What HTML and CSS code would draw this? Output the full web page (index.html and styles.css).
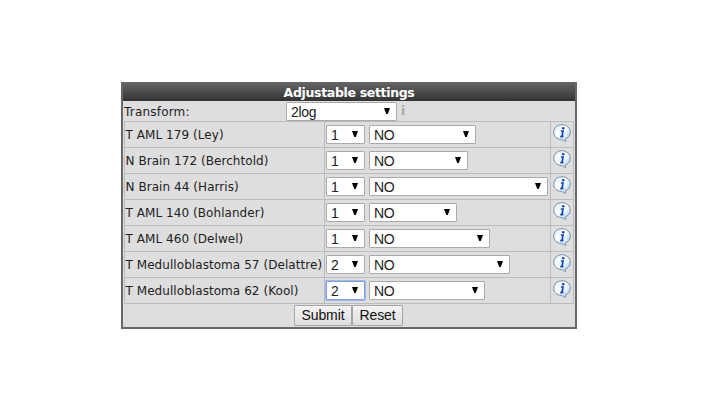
FILE: index.html
```html
<!DOCTYPE html>
<html lang="en">
<head>
<meta charset="utf-8">
<title>Adjustable settings</title>
<link rel="stylesheet" href="styles.css">
</head>
<body>
<svg class="defs" aria-hidden="true">
  <defs>
    <linearGradient id="bubble" x1="0" y1="0" x2="1" y2="1">
      <stop offset="0" stop-color="#d5edff"/><stop offset=".4" stop-color="#fff"/><stop offset=".65" stop-color="#e4f3ff"/><stop offset="1" stop-color="#80bdf0"/>
    </linearGradient>
    <symbol id="info" viewBox="0 0 18 18">
      <path d="M9 .7C4.300.7.8 3.900.8 8.200c0 4 2.900 6.900 7.400 7.300 1.400.2 2.500 1.200 4.600 1.900-.6-1-.6-1.900-.2-2.700 2.800-1 4.600-3.500 4.600-6.500C17.200 3.900 13.700.7 9 .7z" fill="url(#bubble)" stroke="#7590a8" stroke-width="1"/>
      <path d="M7.800 7h2.200L9 12.300h1.500M7.200 12.600h2.700" fill="none" stroke="#1747b5" stroke-width="1.700"/>
      <circle cx="10.200" cy="4.300" r="1.300" fill="#1747b5"/>
    </symbol>
  </defs>
</svg>
<main class="panel">
  <h1 class="title">Adjustable settings</h1>
  <div class="transform"><span class="transform-label">Transform:</span><div class="select w-transform">2log</div><span class="hint">i</span></div>
  <div class="grid">
    <div class="row"><div class="name">T AML 179 (Ley)</div><div class="controls"><div class="select count">1</div><div class="select w-ley">NO</div></div><div class="info"><svg><use href="#info"/></svg></div></div>
    <div class="row"><div class="name">N Brain 172 (Berchtold)</div><div class="controls"><div class="select count">1</div><div class="select w-berchtold">NO</div></div><div class="info"><svg><use href="#info"/></svg></div></div>
    <div class="row"><div class="name">N Brain 44 (Harris)</div><div class="controls"><div class="select count">1</div><div class="select w-harris">NO</div></div><div class="info"><svg><use href="#info"/></svg></div></div>
    <div class="row"><div class="name">T AML 140 (Bohlander)</div><div class="controls"><div class="select count">1</div><div class="select w-bohlander">NO</div></div><div class="info"><svg><use href="#info"/></svg></div></div>
    <div class="row"><div class="name">T AML 460 (Delwel)</div><div class="controls"><div class="select count">1</div><div class="select w-delwel">NO</div></div><div class="info"><svg><use href="#info"/></svg></div></div>
    <div class="row"><div class="name">T Medulloblastoma 57 (Delattre)</div><div class="controls"><div class="select count">2</div><div class="select w-delattre">NO</div></div><div class="info"><svg><use href="#info"/></svg></div></div>
    <div class="row"><div class="name">T Medulloblastoma 62 (Kool)</div><div class="controls"><div class="select count focused">2</div><div class="select w-kool">NO</div></div><div class="info"><svg><use href="#info"/></svg></div></div>
  </div>
  <div class="actions"><button class="submit">Submit</button><button class="reset">Reset</button></div>
</main>
</body>
</html>
```
FILE: styles.css
```css
* { box-sizing: border-box; }
body { margin: 0; padding: 82px 0 0 121px; background: #fff; color: #222; font: 12px/18px "DejaVu Sans", sans-serif; letter-spacing: .06px; }
.defs { display: block; width: 0; height: 0; }
.panel { width: 456px; height: 247px; border: 2px solid #686868; border-top: 0; background: #dedede; }
.title { margin: 0; height: 19px; background: linear-gradient(#666, #333); color: #fff; font-size: 12.5px; line-height: 21px; letter-spacing: -.33px; text-align: center; }
.transform { display: flex; height: 20px; padding: 1px 0 0 1px; }
.transform-label { width: 162px; line-height: 20px; letter-spacing: .2px; }
.grid { width: 450px; margin-left: 1px; border: 1px solid #bcbcbc; border-bottom: 0; }
.row { display: grid; grid-template-columns: 199px 226px 23px; height: 26px; border-bottom: 1px solid #bcbcbc; }
.name { padding-left: .5px; line-height: 26px; white-space: nowrap; }
.controls { display: flex; gap: 4px; padding: 3px 0 0 1px; border-left: 1px solid #bcbcbc; }
.info { border-left: 1px solid #bcbcbc; padding: 2px 0 0 2px; }
.info svg { display: block; width: 18px; height: 18px; }
.select { display: flex; justify-content: space-between; align-items: center; height: 19px; padding: 0 6px 0 4px; border: 1px solid #aaa; border-radius: 1px; background: #fff; color: #222; font: 14px/18px "Liberation Sans", sans-serif; letter-spacing: -.35px; }
.select::after { content: ""; width: 6px; height: 6px; margin-top: -1px; background: #000; clip-path: polygon(0 0, 100% 0, 62% 100%, 38% 100%); }
.count { width: 39px; }
.focused { border-color: #7da2e8; box-shadow: 0 0 0 1px #9bb8ea; }
.w-transform { width: 111px; }
.w-ley { width: 107px; }
.w-berchtold { width: 99px; }
.w-harris { width: 179px; }
.w-bohlander { width: 88px; }
.w-delwel { width: 121px; }
.w-delattre { width: 141px; }
.w-kool { width: 116px; }
.hint { margin-left: 4px; color: #a6a6a6; font-size: 12px; font-weight: bold; line-height: 19px; }
.actions { display: flex; padding: 1px 0 0 171px; }
.actions button { height: 21px; padding: 0; border: 1px solid #a5a5a5; border-radius: 1px; background: linear-gradient(#f4f4f4, #dedede); color: #111; font: 14px/17px "Liberation Sans", sans-serif; letter-spacing: -.1px; }
.actions .submit { width: 58px; }
.actions .reset { width: 51px; }
```
